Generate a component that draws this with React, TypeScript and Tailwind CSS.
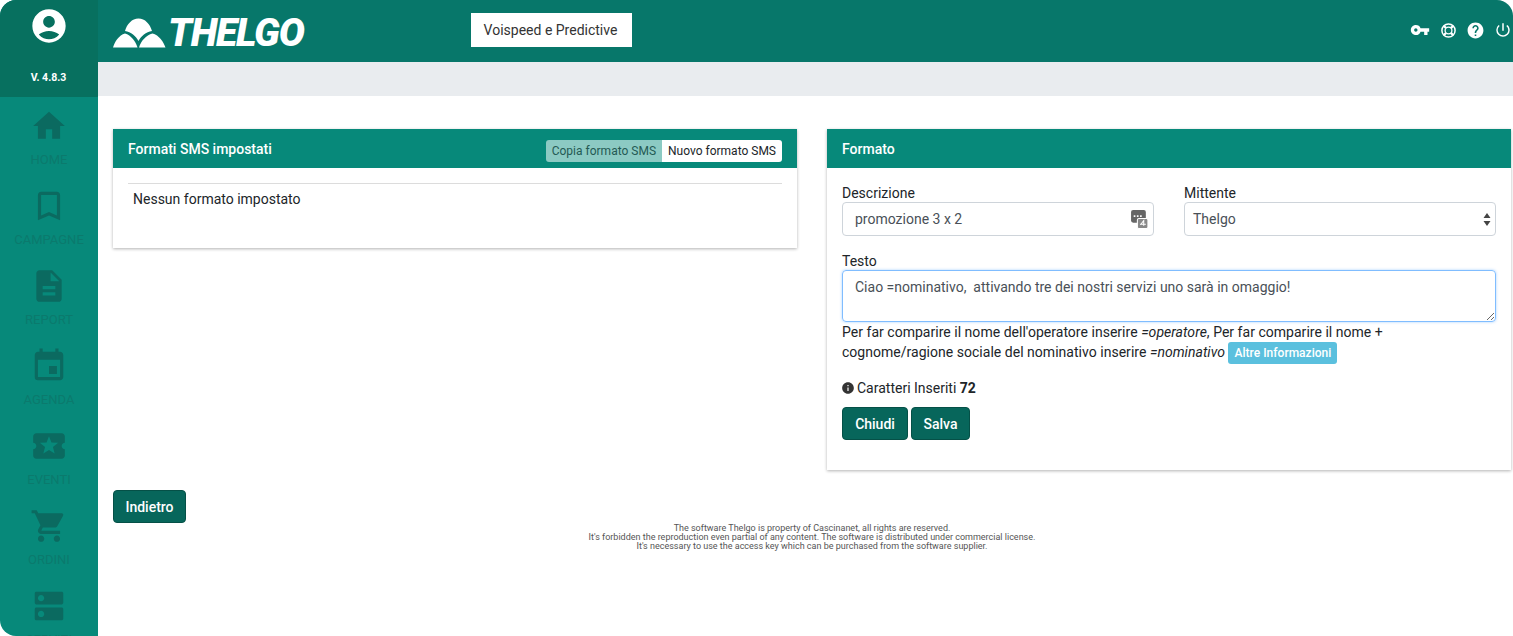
import React from "react";
import { MdAccountCircle, MdHome, MdBookmarkBorder, MdDescription, MdEvent, MdLocalActivity, MdShoppingCart, MdDns, MdVpnKey, MdHelp, MdPowerSettingsNew, MdInfo } from "react-icons/md";

const nav = [
  { icon: MdHome, label: "HOME" },
  { icon: MdBookmarkBorder, label: "CAMPAGNE" },
  { icon: MdDescription, label: "REPORT" },
  { icon: MdEvent, label: "AGENDA" },
  { icon: MdLocalActivity, label: "EVENTI" },
  { icon: MdShoppingCart, label: "ORDINI" },
  { icon: MdDns, label: "SERVIZI" },
];

function Logo() {
  return (
    <div className="flex items-center">
      <svg width="53" height="30" viewBox="0 0 53 30" fill="white">
        <path d="M0 29.5 C1.5 24 6 17 12 15.5 C18 17 23 24 24.5 29.5 Z" />
        <path d="M26 29.5 C28 23 33 17 39.5 15.5 C46 17 50.5 24 52.5 29.5 Z" />
        <path d="M12 13 C14 6 19 0.5 25.5 0.5 C32 0.5 37 6 39 13 C33 14 28 18 25.5 23 C23 18 18 14 12 13 Z" />
      </svg>
      <span className="ml-[2px] text-[39px] leading-[34px] font-black italic tracking-[-1.2px] text-white font-['Roboto',sans-serif]">THELGO</span>
    </div>
  );
}

function Btn({ children, className = "" }: { children: React.ReactNode; className?: string }) {
  return (
    <button className={`h-[33px] rounded-[4px] bg-[#07665b] border border-[#055047] pt-[1px] text-[14px] font-medium text-white ${className}`}>{children}</button>
  );
}

export default function App() {
  return (
    <div className="relative flex h-[636px] w-[1513px] overflow-hidden bg-white font-['Roboto',sans-serif] text-[14px] text-[#212529]">
      <aside className="flex w-[98px] shrink-0 flex-col overflow-hidden rounded-tl-[16px] rounded-bl-[16px] bg-[#07897a]">
        <div className="flex h-[97px] shrink-0 flex-col items-center bg-[#07705f]">
          <MdAccountCircle className="mt-[6px] text-white" size={40} />
          <span className="mt-[25px] ml-[-1px] text-[10.5px] leading-[14px] font-bold text-white">V. 4.8.3</span>
        </div>
        <nav className="flex flex-col items-center pt-[10px]">
          {nav.map(({ icon: Icon, label }) => (
            <div key={label} className="flex h-[80px] shrink-0 flex-col items-center">
              <Icon className="text-[#0b6a60]" size={38} />
              <span className="mt-[7px] text-[13px] leading-[16px] text-[#0b7a6d]">{label}</span>
            </div>
          ))}
        </nav>
      </aside>
      <main className="flex min-w-0 flex-1 flex-col">
        <header className="flex h-[62px] shrink-0 items-start rounded-tr-[16px] bg-[#07776a] pl-[15px]">
          <div className="mt-[16px] w-[358px]"><Logo /></div>
          <div className="mt-[13px] flex h-[34px] w-[161px] items-center justify-center bg-white pr-[2px] text-[14px] text-[#333]">Voispeed e Predictive</div>
          <div className="ml-auto mt-[20px] flex items-center gap-[10px] pr-[1px] text-white">
            <MdVpnKey size={20} className="mr-[1px]" />
            <svg width="15" height="15" viewBox="0 0 15 15" fill="none" stroke="white">
              <circle cx="7.5" cy="7.5" r="6.6" strokeWidth="1.5" />
              <circle cx="7.5" cy="7.5" r="3.4" strokeWidth="1.3" />
              <path d="M3 3 L5 5 M12 3 L10 5 M3 12 L5 10 M12 12 L10 10" strokeWidth="2.4" />
            </svg>
            <MdHelp size={19} />
            <MdPowerSettingsNew size={18} className="ml-[-1px]" />
          </div>
        </header>
        <div className="h-[34px] shrink-0 bg-[#e9ecef]" />
        <div className="flex items-start gap-[30px] pl-[15px] pr-[2px] pt-[33px]">
          <section className="h-[119px] w-[684px] bg-white shadow-[0_1px_3px_rgba(0,0,0,0.3)]">
            <div className="flex h-[39px] items-center justify-between bg-[#07897a] pl-[15px] pr-[15px]">
              <h2 className="pt-[2px] text-[14px] font-medium text-white">Formati SMS impostati</h2>
              <div className="flex pt-[4px] text-[12px]">
                <span className="flex h-[22px] items-center rounded-l-[3px] bg-[#8ccac3] px-[6px] text-[#245a54]">Copia formato SMS</span>
                <span className="flex h-[22px] items-center rounded-r-[3px] bg-white px-[6px] text-[#212529]">Nuovo formato SMS</span>
              </div>
            </div>
            <div className="mx-[15px] mt-[15px] border-t border-[#dcdcdc] pl-[5px] pt-[7px] leading-[16px]">Nessun formato impostato</div>
          </section>
          <section className="h-[341px] w-[684px] bg-white shadow-[0_1px_3px_rgba(0,0,0,0.3)]">
            <div className="flex h-[39px] items-center bg-[#07897a] pl-[15px]">
              <h2 className="pt-[2px] text-[14px] font-medium text-white">Formato</h2>
            </div>
            <div className="px-[15px] pt-[17px]">
              <div className="flex gap-[30px]">
                <div className="w-[312px]">
                  <div className="leading-[17px]">Descrizione</div>
                  <div className="relative flex h-[34px] items-center rounded-[4px] border border-[#ced4da] pl-[12px] pt-[1px] text-[#495057]">
                    promozione 3 x 2
                    <svg className="absolute right-[5px] top-[7px]" width="17" height="19" viewBox="0 0 16 18">
                      <rect x="0" y="0" width="14" height="12" rx="2" fill="#666" />
                      <rect x="2.5" y="5" width="1.6" height="1.6" fill="#fff" />
                      <rect x="5.5" y="5" width="1.6" height="1.6" fill="#fff" />
                      <rect x="8.5" y="5" width="1.6" height="1.6" fill="#fff" />
                      <rect x="6" y="8" width="10" height="9.5" rx="1.5" fill="#888" stroke="#fff" />
                      <path d="M9 14 L12 10 V15 M8.5 13.5 H14" stroke="#fff" fill="none" />
                    </svg>
                  </div>
                </div>
                <div className="w-[312px]">
                  <div className="leading-[17px]">Mittente</div>
                  <div className="relative flex h-[34px] items-center rounded-[4px] border border-[#ced4da] pl-[8px] text-[#495057]">
                    Thelgo
                    <svg className="absolute right-[4px] top-[10px]" width="8" height="13" viewBox="0 0 8 13" fill="#444">
                      <path d="M4 0 L7.5 5 H0.5 Z M4 13 L0.5 8 H7.5 Z" />
                    </svg>
                  </div>
                </div>
              </div>
              <div className="mt-[17px] leading-[17px]">Testo</div>
              <div className="relative h-[52px] rounded-[4px] border border-[#80bdff] pl-[12px] pt-[6px] leading-[20px] text-[#495057] shadow-[0_0_3px_rgba(0,123,255,0.35)]">
                Ciao =nominativo,&nbsp; attivando tre dei nostri servizi uno sarà in omaggio!
                <svg className="absolute bottom-[1px] right-[1px]" width="8" height="8" viewBox="0 0 8 8" stroke="#666" fill="none">
                  <path d="M1 8 L8 1 M5 8 L8 5" />
                </svg>
              </div>
              <p className="w-[560px] leading-[20px] tracking-[0.025px]">
                Per far comparire il nome dell'operatore inserire <em>=operatore</em>, Per far comparire il nome + cognome/ragione sociale del nominativo inserire <em>=nominativo</em>{" "}
                <span className="my-[-2px] inline-flex h-[22px] items-center rounded-[3px] bg-[#5bc0de] px-[6px] align-middle text-[12px] font-medium text-white">Altre Informazioni</span>
              </p>
              <div className="mt-[16px] ml-[-1px] flex items-center gap-[2px] leading-[20px]">
                <MdInfo size={14} className="text-[#333]" />
                <span>Caratteri Inseriti <b>72</b></span>
              </div>
              <div className="mt-[9px] flex gap-[3px]">
                <Btn className="w-[66px]">Chiudi</Btn>
                <Btn className="w-[59px]">Salva</Btn>
              </div>
            </div>
          </section>
        </div>
        <div className="pl-[15px] pt-[20px]"><Btn className="w-[73px]">Indietro</Btn></div>
        <footer className="mt-[1px] w-[1428px] text-center text-[9px] leading-[9px] text-[#555]">
          <div>The software Thelgo is property of Cascinanet, all rights are reserved.</div>
          <div>It's forbidden the reproduction even partial of any content. The software is distributed under commercial license.</div>
          <div>It's necessary to use the access key which can be purchased from the software supplier.</div>
        </footer>
      </main>
    </div>
  );
}
